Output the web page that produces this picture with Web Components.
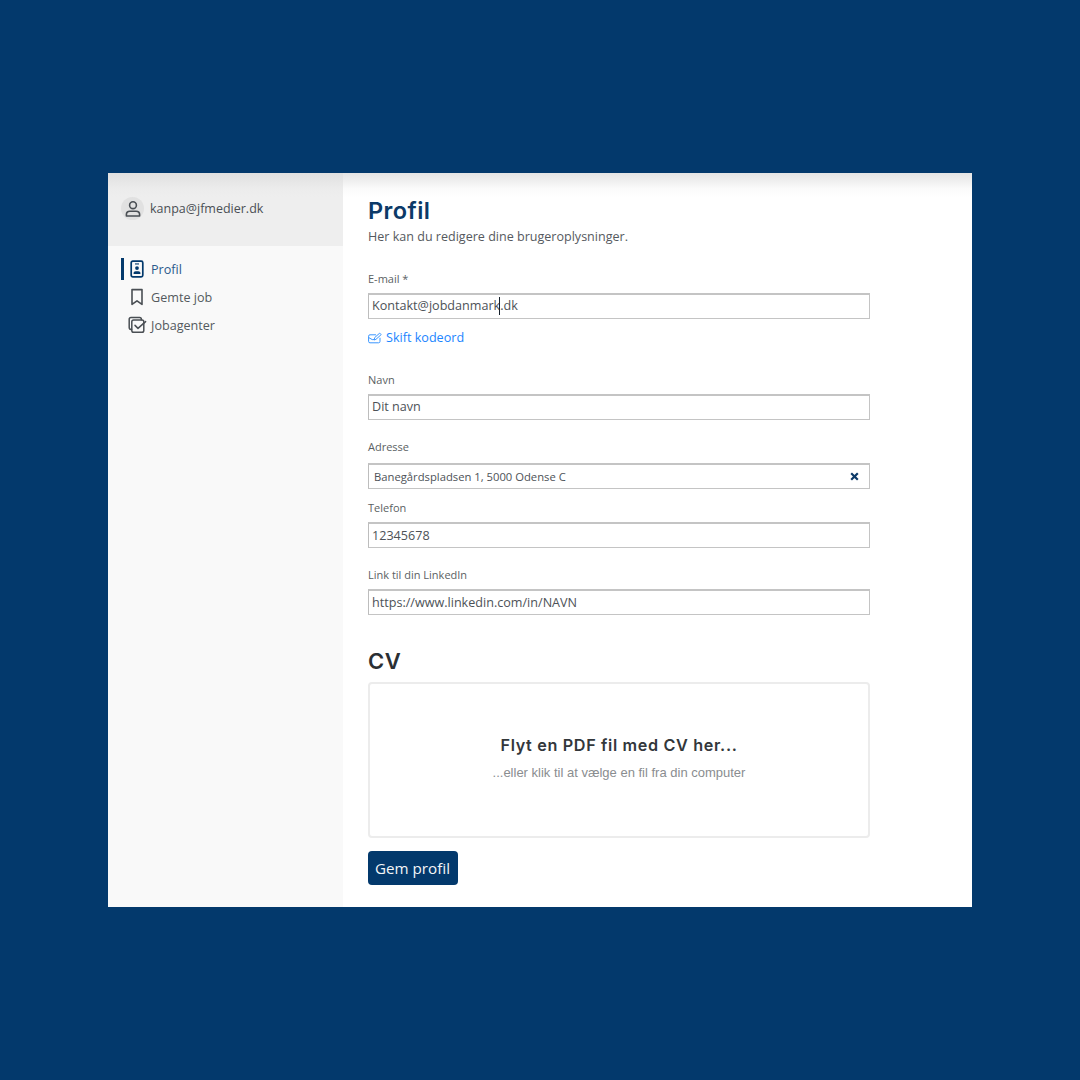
<!DOCTYPE html>
<html lang="da">
<head>
<meta charset="utf-8">
<title>Profil</title>
<style>
  html, body { margin: 0; height: 100%; }
  body {
    background: #03396c;
    font-family: "Open Sans", "Noto Sans", sans-serif;
    color: #495057;
  }
  profile-app { margin: 173px 108px 0; }
</style>
</head>
<body>

<profile-app>
  <side-bar slot="side" email="kanpa@jfmedier.dk">
    <nav-item label="Profil" icon="badge" active></nav-item>
    <nav-item label="Gemte job" icon="bookmark"></nav-item>
    <nav-item label="Jobagenter" icon="agents"></nav-item>
  </side-bar>

  <h-title level="1">Profil</h-title>
  <p-intro style="margin-top:3px">Her kan du redigere dine brugeroplysninger.</p-intro>

  <form-field style="margin-top:25px" label="E-mail *" value="Kontakt@jobdanmark.dk" caret="130"></form-field>
  <pw-link style="margin-top:10px">Skift kodeord</pw-link>

  <form-field style="margin-top:25px" label="Navn" value="Dit navn"></form-field>
  <form-field style="margin-top:19px" label="Adresse" value="Banegårdspladsen 1, 5000 Odense C" address></form-field>
  <form-field style="margin-top:11px;--text-nudge:0px" label="Telefon" value="12345678"></form-field>
  <form-field style="margin-top:19px;--text-nudge:0px" label="Link til din LinkedIn" value="https://www.linkedin.com/in/NAVN"></form-field>

  <h-title level="2" style="margin-top:32px">CV</h-title>
  <drop-zone style="margin-top:7px"></drop-zone>
  <save-button style="margin-top:13px">Gem profil</save-button>
</profile-app>

<script>
// Ikoner til menuen
const ICONS = {
  user: `<svg width="18" height="18" viewBox="0 0 18 18" fill="none" stroke="currentColor" stroke-width="1.6">
      <circle cx="9" cy="5.2" r="3.4"/>
      <path d="M2.4 16v-1.4c0-2 1.5-3.3 3.5-3.3h6.2c2 0 3.5 1.3 3.5 3.3V16z" stroke-linejoin="round"/>
    </svg>`,
  badge: `<svg width="16" height="18" viewBox="0 0 16 18">
      <rect x="2.2" y="1.2" width="11.6" height="15.6" rx="1.6" fill="none" stroke="currentColor" stroke-width="1.7"/>
      <rect x="6" y="3.4" width="4" height="1.1" fill="currentColor"/>
      <circle cx="8" cy="8.1" r="1.9" fill="currentColor"/>
      <path d="M4.6 14v-1c0-1.1.9-1.8 2-1.8h2.8c1.1 0 2 .7 2 1.8v1z" fill="currentColor"/>
    </svg>`,
  bookmark: `<svg width="16" height="18" viewBox="0 0 16 18" fill="none" stroke="currentColor" stroke-width="1.6" stroke-linejoin="round">
      <path d="M3 1.6h10v14.8l-5-3.6-5 3.6z"/>
    </svg>`,
  agents: `<svg width="20" height="18" viewBox="0 0 20 18" fill="none" stroke="currentColor" stroke-width="1.5" stroke-linejoin="round" stroke-linecap="round">
      <path d="M3.6 13.4H3a1.8 1.8 0 0 1-1.8-1.8V3.2A1.8 1.8 0 0 1 3 1.4h8.6a1.8 1.8 0 0 1 1.8 1.8v.6"/>
      <rect x="3.8" y="3.9" width="12" height="12.4" rx="1.8"/>
      <path d="M7 9.4l3 3 7.6-6.8"/>
    </svg>`
};

class ProfileApp extends HTMLElement {
  constructor() {
    super();
    this.attachShadow({ mode: "open" }).innerHTML = `
      <style>
        :host { display: grid; grid-template-columns: 235px 1fr; height: 734px; background: #fff; }
        main {
          display: flex;
          flex-direction: column;
          align-items: flex-start;
          padding: 24px 0 0 25px;
          background: linear-gradient(#e4e4e4, #fbfbfb 16px, #fff 24px);
        }
      </style>
      <slot name="side"></slot>
      <main><slot></slot></main>`;
  }
}

class SideBar extends HTMLElement {
  constructor() {
    super();
    this.attachShadow({ mode: "open" }).innerHTML = `
      <style>
        :host { display: block; background: #f9f9f9; }
        header {
          height: 73px;
          box-sizing: border-box;
          display: flex;
          align-items: flex-start;
          gap: 6px;
          padding: 24px 0 0 13px;
          background: linear-gradient(#e0e0e0, #ececec 16px, #eeeeee 24px);
          font-size: 12.5px;
          line-height: 22px;
          color: #4a4f54;
        }
        .avatar {
          width: 23px; height: 23px; border-radius: 50%;
          background: #e1e1e1; color: #4a4f54;
          display: flex; align-items: center; justify-content: center;
        }
        .mail { padding-top: 1px; }
        nav { display: flex; flex-direction: column; gap: 4px; padding-top: 11px; }
      </style>
      <header>
        <span class="avatar">${ICONS.user}</span>
        <span class="mail"></span>
      </header>
      <nav><slot></slot></nav>`;
  }
  connectedCallback() {
    this.shadowRoot.querySelector(".mail").textContent = this.getAttribute("email");
  }
}

class NavItem extends HTMLElement {
  constructor() {
    super();
    this.attachShadow({ mode: "open" });
  }
  connectedCallback() {
    const active = this.hasAttribute("active");
    const icon = this.getAttribute("icon");
    this.shadowRoot.innerHTML = `
      <style>
        :host {
          display: flex;
          align-items: center;
          height: 24px;
          margin-left: 13px;
          font-size: 12.6px;
          color: ${active ? "#2a5a8c" : "#54595e"};
        }
        .bar { width: 3px; height: 22px; background: ${active ? "#03396c" : "transparent"}; flex: none; }
        .ico {
          width: 20px;
          margin-left: ${icon === "agents" ? "4px" : "3px"};
          display: flex; justify-content: center;
          color: ${active ? "#03396c" : "#4a4f54"};
        }
        .txt { margin-left: ${icon === "agents" ? "3px" : "4px"}; }
      </style>
      <span class="bar"></span>
      <span class="ico">${ICONS[icon]}</span>
      <span class="txt">${this.getAttribute("label")}</span>`;
  }
}

class HTitle extends HTMLElement {
  constructor() {
    super();
    this.attachShadow({ mode: "open" });
  }
  connectedCallback() {
    const big = this.getAttribute("level") === "1";
    this.shadowRoot.innerHTML = `
      <style>
        :host {
          display: block;
          font-family: Inter, "Noto Sans", sans-serif;
          font-weight: 600;
          font-size: ${big ? "23.5px" : "22px"};
          line-height: 28px;
          letter-spacing: ${big ? "0.4px" : "0.6px"};
          color: ${big ? "#0c3a68" : "#2b2f33"};
        }
      </style><slot></slot>`;
  }
}

class PIntro extends HTMLElement {
  constructor() {
    super();
    this.attachShadow({ mode: "open" }).innerHTML = `
      <style>:host { display: block; font-size: 12.55px; line-height: 18px; color: #55595e; }</style>
      <slot></slot>`;
  }
}

class FormField extends HTMLElement {
  constructor() {
    super();
    this.attachShadow({ mode: "open" });
  }
  connectedCallback() {
    const isAddress = this.hasAttribute("address");
    const caret = this.getAttribute("caret");
    this.shadowRoot.innerHTML = `
      <style>
        :host { display: block; width: 502px; }
        label { display: block; font-size: 11px; line-height: 15px; color: #5b5f63; margin-bottom: ${isAddress ? 9 : 7}px; }
        .box {
          position: relative;
          box-sizing: border-box;
          height: 26px;
          border: 1px solid #c4c4c4;
          border-top-width: 2px;
          border-left-color: #bdbdbd;
          display: flex;
          align-items: center;
          justify-content: space-between;
          padding: 0 10px var(--text-nudge, 2px) 3px;
          font-size: 12.6px;
          color: #4d5257;
          background: #fff;
        }
        .box.addr { padding: 0 10px 0 5px; font-size: 11.25px; }
        .x svg { display: block; }
        .caret { position: absolute; top: 2px; width: 1px; height: 18px; background: #15202b; }
      </style>
      <label>${this.getAttribute("label")}</label>
      <div class="box ${isAddress ? "addr" : ""}">
        <span>${this.getAttribute("value")}</span>
        ${isAddress ? `<span class="x"><svg width="9" height="9" viewBox="0 0 9 9"><path d="M1.2 1.2l6.6 6.6M7.8 1.2L1.2 7.8" stroke="#0c3a68" stroke-width="2.2"/></svg></span>` : ""}
        ${caret ? `<span class="caret" style="left:${caret}px"></span>` : ""}
      </div>`;
  }
}

class PwLink extends HTMLElement {
  constructor() {
    super();
    this.attachShadow({ mode: "open" }).innerHTML = `
      <style>
        :host { display: flex; align-items: center; gap: 4px; font-size: 12.6px; line-height: 18px; color: #1a85ff; }
        svg { display: block; }
      </style>
      <svg width="14" height="12" viewBox="0 0 14 12" fill="none" stroke="currentColor" stroke-width="1" stroke-linejoin="round" stroke-linecap="round" opacity=".85">
        <path d="M7.6 2.8H2a1.4 1.4 0 0 0-1.4 1.4v5.2A1.4 1.4 0 0 0 2 10.8h8.6a1.4 1.4 0 0 0 1.4-1.4V6.2"/>
        <path d="M.8 5.6l3.4 2h2"/>
        <path d="M6.2 7.6l.5-2 5-4.5 1.5 1.5-5 4.5z"/>
      </svg>
      <slot></slot>`;
  }
}

class DropZone extends HTMLElement {
  constructor() {
    super();
    this.attachShadow({ mode: "open" }).innerHTML = `
      <style>
        :host {
          display: flex;
          flex-direction: column;
          align-items: center;
          box-sizing: border-box;
          width: 502px;
          height: 156px;
          padding-top: 51px;
          border: 2px solid #ececec;
          border-radius: 4px;
          background: #fff;
        }
        b {
          font-family: Inter, "Noto Sans", sans-serif;
          font-weight: 600;
          font-size: 16.2px;
          line-height: 20px;
          letter-spacing: 0.65px;
          color: #33373b;
        }
        span {
          margin-top: 11px;
          font-family: "Liberation Sans", Arial, sans-serif;
          font-size: 13px;
          line-height: 14px;
          color: #8a8d90;
        }
      </style>
      <b>Flyt en PDF fil med CV her...</b>
      <span>...eller klik til at vælge en fil fra din computer</span>`;
  }
}

class SaveButton extends HTMLElement {
  constructor() {
    super();
    this.attachShadow({ mode: "open" }).innerHTML = `
      <style>
        :host {
          display: flex;
          align-items: center;
          justify-content: center;
          box-sizing: border-box;
          width: 90px;
          height: 34px;
          padding: 0 1px 1px 0;
          border-radius: 4px;
          background: #03396c;
          color: #f4f6f8;
          font-size: 15.2px;
        }
      </style><slot></slot>`;
  }
}

customElements.define("profile-app", ProfileApp);
customElements.define("side-bar", SideBar);
customElements.define("nav-item", NavItem);
customElements.define("h-title", HTitle);
customElements.define("p-intro", PIntro);
customElements.define("form-field", FormField);
customElements.define("pw-link", PwLink);
customElements.define("drop-zone", DropZone);
customElements.define("save-button", SaveButton);
</script>
</body>
</html>
